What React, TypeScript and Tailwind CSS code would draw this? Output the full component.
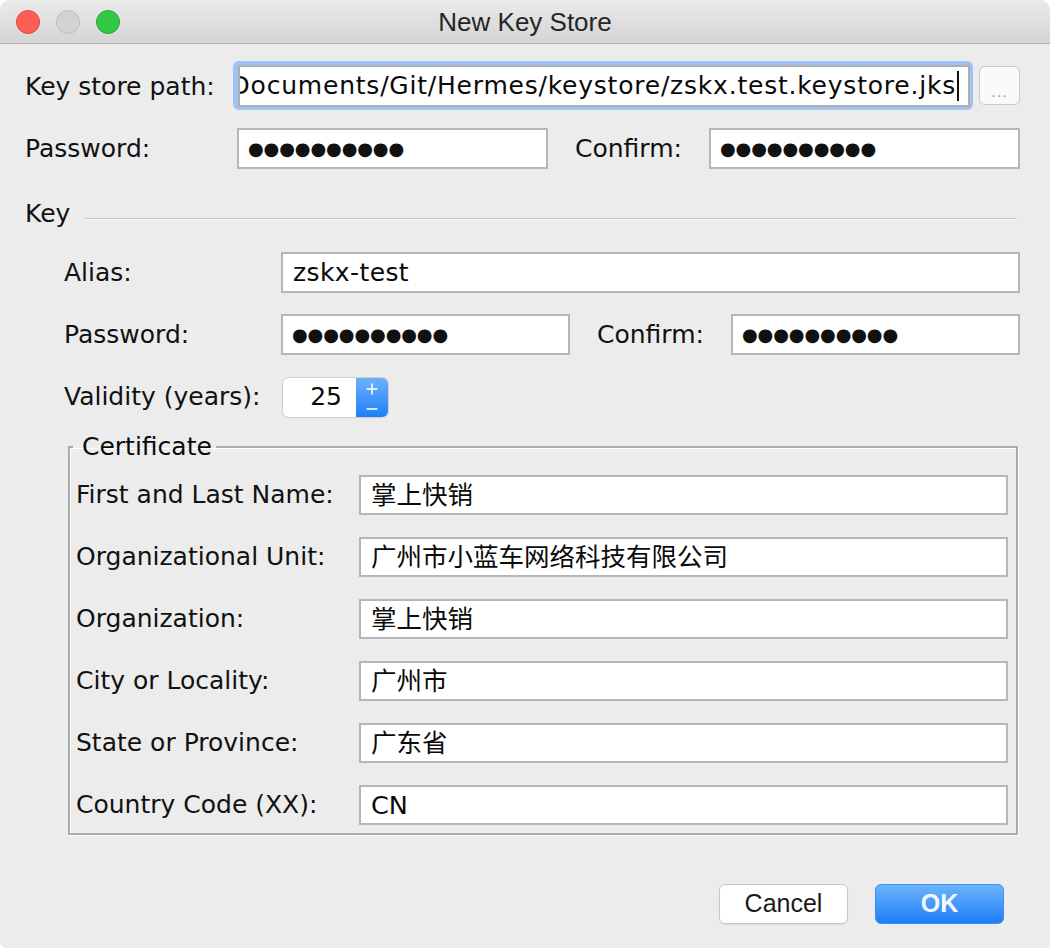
import React from "react";

const DOTS = "●●●●●●●●●●";

function Dots() {
  return (
    <span className="text-[18px] tracking-[-0.1px] text-[#111] font-['DejaVu_Sans',sans-serif] leading-none">
      {DOTS}
    </span>
  );
}

function Box({
  className,
  children,
}: {
  className: string;
  children?: React.ReactNode;
}) {
  return (
    <div
      className={
        "h-[41px] bg-white border-2 border-[#b6b6b6] flex items-center overflow-hidden whitespace-nowrap text-[25px] text-[#0a0a0a] " +
        className
      }
    >
      {children}
    </div>
  );
}

function CertRow({ label, value }: { label: string; value: string }) {
  return (
    <div className="flex items-center h-[40px]">
      <div className="w-[283px] shrink-0">{label}</div>
      <div className="h-[40px] flex-1 bg-white border-2 border-[#b6b6b6] flex items-center pl-[10px] text-[25.5px] text-[#0a0a0a] font-['DejaVu_Sans','Noto_Sans_CJK_SC',sans-serif]">
        {value}
      </div>
    </div>
  );
}

export default function App() {
  return (
    <div className="w-[1050px] h-[948px] bg-[#ececec] rounded-t-[10px] rounded-bl-[6px] overflow-hidden flex flex-col text-[25px] text-[#111] font-['DejaVu_Sans','Noto_Sans_CJK_SC',sans-serif]">
      {/* Title bar */}
      <div className="h-[44px] shrink-0 bg-gradient-to-b from-[#ebebeb] to-[#d4d4d4] border-b border-[#b3b3b3] flex items-center relative">
        <div className="flex items-center gap-[16px] pl-[16px]">
          <div className="w-[24px] h-[24px] rounded-full bg-[#fd5f57] border border-[#e0443e]" />
          <div className="w-[24px] h-[24px] rounded-full bg-[#d3d3d3] border border-[#bdbdbd]" />
          <div className="w-[24px] h-[24px] rounded-full bg-[#33c748] border border-[#1aab29]" />
        </div>
        <div className="absolute inset-0 flex items-center justify-center pt-[2px] text-[26px] text-[#262626] font-['Liberation_Sans',sans-serif]">
          New Key Store
        </div>
      </div>

      <div className="flex flex-col pl-[25px] pr-[30px]">
        {/* Key store path */}
        <div className="flex items-center mt-[17px] h-[49px]">
          <div className="w-[208px] shrink-0 pt-[3px]">Key store path:</div>
          <div className="w-[740px] h-[49px] shrink-0 rounded-[6px] bg-[#9fc3f2] pt-[4px] pb-[3px] pl-[5px] pr-[3px]">
            <div className="h-full bg-white border-2 border-[#aeaeae] flex items-center justify-end overflow-hidden whitespace-nowrap pr-[9px] text-[#0a0a0a] text-[25px] tracking-[0.78px]">
              <span className="shrink-0">Documents/Git/Hermes/keystore/zskx.test.keystore.jks</span>
              <span className="shrink-0 w-[2px] h-[30px] bg-[#111] ml-[1px]" />
            </div>
          </div>
          <div className="ml-[6px] w-[41px] h-[39px] shrink-0 rounded-[6px] bg-[#fafafa] border border-[#c9c9c9] flex items-end justify-center pb-[4px] text-[16px] leading-none text-[#a0a0a0] font-['Liberation_Sans',sans-serif] tracking-[1px]">
            ...
          </div>
        </div>

        {/* Password */}
        <div className="flex items-center mt-[18px] h-[41px]">
          <div className="w-[212px] shrink-0">Password:</div>
          <Box className="w-[311px] pl-[9px]">
            <Dots />
          </Box>
          <div className="ml-[27px] w-[134px] shrink-0">Confirm:</div>
          <Box className="w-[311px] pl-[9px]">
            <Dots />
          </Box>
        </div>

        {/* Key heading */}
        <div className="flex items-center mt-[30px] h-[30px]">
          <div>Key</div>
          <div className="flex-1 ml-[14px] mr-[3px] h-[2px] border-t border-[#c6c6c6] border-b border-b-[#f8f8f8] mt-[10px]" />
        </div>

        <div className="pl-[39px] flex flex-col">
          {/* Alias */}
          <div className="flex items-center mt-[23px] h-[41px]">
            <div className="w-[217px] shrink-0">Alias:</div>
            <Box className="flex-1 pl-[10px] tracking-[0.4px]">zskx-test</Box>
          </div>

          {/* Password 2 */}
          <div className="flex items-center mt-[21px] h-[41px]">
            <div className="w-[217px] shrink-0">Password:</div>
            <Box className="w-[289px] pl-[9px]">
              <Dots />
            </Box>
            <div className="ml-[27px] w-[134px] shrink-0">Confirm:</div>
            <Box className="w-[289px] pl-[9px]">
              <Dots />
            </Box>
          </div>

          {/* Validity */}
          <div className="flex items-center mt-[22px] h-[40px]">
            <div className="w-[219px] shrink-0">Validity (years):</div>
            <div className="flex h-[39px] rounded-[6px] shadow-[0_0_0_1px_#d0d0d0,0_1px_1px_rgba(0,0,0,0.12)]">
              <div className="w-[73px] bg-white rounded-l-[6px] flex items-center justify-end pr-[14px] text-[#0a0a0a]">
                25
              </div>
              <div className="w-[32px] rounded-r-[6px] bg-gradient-to-b from-[#69b1fb] to-[#1a7ff6] flex items-center justify-center">
                <svg width="14" height="30" viewBox="0 0 14 30" fill="none" stroke="#ffffff" strokeWidth="1.6">
                  <line x1="1.5" y1="7" x2="12.5" y2="7" />
                  <line x1="7" y1="1.5" x2="7" y2="12.5" />
                  <line x1="1.5" y1="27" x2="12.5" y2="27" />
                </svg>
              </div>
            </div>
          </div>

          {/* Certificate */}
          <fieldset className="mt-[16px] ml-[4px] mr-[2px] border-2 border-[#aaaaaa] shadow-[1px_1px_0_#ffffff,inset_1px_1px_0_#ffffff] pl-[6px] pr-[8px] pb-[8px] flex flex-col">
            <legend className="-ml-[3px] pl-[9px] pr-[4px] leading-[28px] text-[#0a0a0a]">
              Certificate
            </legend>
            <div className="flex flex-col gap-[22px] mt-[14px]">
              <CertRow label="First and Last Name:" value="掌上快销" />
              <CertRow label="Organizational Unit:" value="广州市小蓝车网络科技有限公司" />
              <CertRow label="Organization:" value="掌上快销" />
              <CertRow label="City or Locality:" value="广州市" />
              <CertRow label="State or Province:" value="广东省" />
              <CertRow label="Country Code (XX):" value="CN" />
            </div>
          </fieldset>
        </div>
      </div>

      {/* Buttons */}
      <div className="mt-auto mb-[24px] flex justify-end gap-[27px] pr-[46px] font-['Liberation_Sans',sans-serif] text-[25px]">
        <div className="w-[129px] h-[40px] rounded-[6px] bg-white border border-[#c6c6c6] shadow-[0_1px_1px_rgba(0,0,0,0.08)] flex items-center justify-center text-[#1a1a1a]">
          Cancel
        </div>
        <div className="w-[129px] h-[40px] rounded-[6px] bg-gradient-to-b from-[#6bb3fb] to-[#1a7ef8] border border-[#3d8ef5] flex items-center justify-center text-[#f4f8ff] font-semibold">
          OK
        </div>
      </div>
    </div>
  );
}
